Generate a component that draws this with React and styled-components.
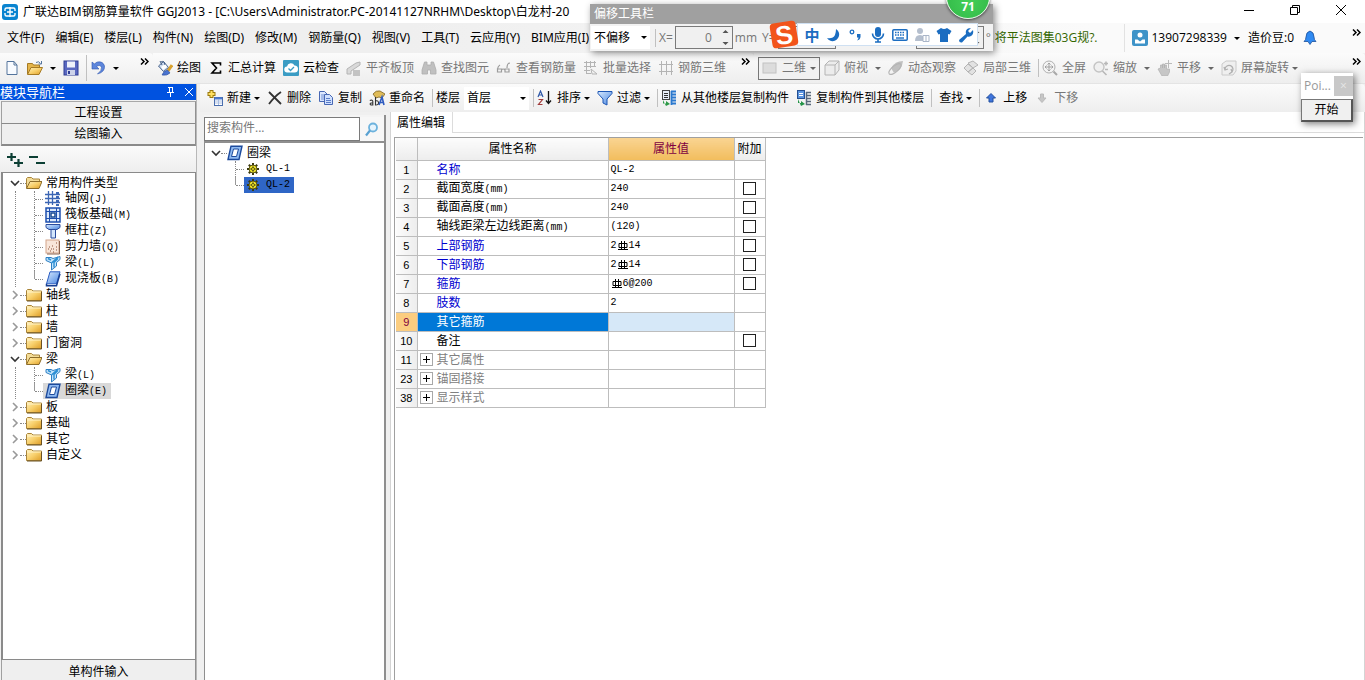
import { useState } from "react"
import styled, { createGlobalStyle, css } from "styled-components";


const GlobalStyle = createGlobalStyle`
* {
    box-sizing: border-box;
}
body {
    margin: 0;
    background: #f0f0f0;
    color: #000;
    font-family: "Open Sans", "Noto Sans CJK SC", sans-serif;
    font-size: 12px;
    line-height: 16px;
    white-space: nowrap;
    overflow: hidden;
}
button, input, select {
    font: inherit;
    color: inherit;
    margin: 0;
    padding: 0;
    border: none;
    background: none;
    border-radius: 0;
    appearance: none;
}
ul {
    list-style: none;
    margin: 0;
    padding: 0;
}
svg {
    flex: none;
    display: block;
}
`

const Window = styled.div`
display: flex;
flex-direction: column;
min-height: 100vh;
`

const TitleBar = styled.header`
display: flex;
align-items: center;
gap: 5px;
height: 23px;
padding-left: 2px;
background: #fff;
`

const Title = styled.h1`
flex: 1;
margin: 0;
font-family: "Noto Sans", "Noto Sans CJK SC", sans-serif;
font-size: 12px;
font-weight: normal;
overflow: hidden;
`

const WindowButtons = styled.div`
display: flex;
align-self: flex-start;
gap: 5px;
padding-right: 4px;
`

const WindowButton = styled.button`
display: flex;
align-items: center;
justify-content: center;
width: 41px;
height: 20px;
`

const MenuBar = styled.nav`
display: flex;
align-items: center;
height: 30px;
padding: 0 4px 0 7px;
background: linear-gradient(90deg, #efefef 30%, #fafafa 80%);
`

const Menus = styled.div`
display: flex;
gap: 11px;
font-family: "Noto Sans", "Noto Sans CJK SC", sans-serif;
`

const Account = styled.div`
display: flex;
align-items: center;
margin-left: auto;
`

const Notice = styled.a`
color: #336600;
text-decoration: none;
margin-right: 26px;
`

const UserButton = styled.button`
display: flex;
align-items: center;
gap: 4px;
margin-left: 4px;
margin-right: 8px;
`

const Bell = styled.button`
margin: 0 34px 0 8px;
`

const Toolbars = styled.div`
display: flex;
height: 31px;
border-bottom: 1px solid #e4e4e4;
`

const Strip = styled.div`
display: flex;
align-items: center;
flex: ${(p) => (p.$width ? `0 0 ${p.$width}px` : "1")};
padding: 0 4px;
border-radius: 0 4px 4px 0;
background: linear-gradient(180deg, #fbfbfb, #eeeeee);
`

const EditStrip = styled(Strip)`
flex: 0 0 28px;
padding-left: 7px;
`

const ToolButton = styled.button`
display: inline-flex;
align-items: center;
gap: 4px;
margin-right: 7px;
padding-left: ${(p) => (p.$textOnly ? 4 : 0)}px;
color: #000;
&:disabled {
    color: #777;
}
`

const Arrow = styled.i`
border: 3px solid transparent;
border-top-color: ${(p) => (p.$dim ? "#666" : "#000")};
border-bottom: none;
margin-left: ${(p) => (p.$wide ? 3 : -1)}px;
`

const Divider = styled.i`
width: 1px;
height: ${(p) => p.$tall || 18}px;
margin-right: 3px;
background: ${(p) => (p.$light ? "#e2e2e2" : "#c0c0c0")};
`

const More = styled.button`
align-self: flex-start;
margin-left: auto;
padding: 5px 0;
`

const FieldLabel = styled.label`
margin-right: 4px;
`

const SelectBox = styled.label`
display: flex;
align-items: center;
gap: 4px;
height: 23px;
width: ${(p) => p.$width}px;
padding: 0 3px;
margin-right: 4px;
background: ${(p) => (p.$framed ? "#f1f1f1" : "#fff")};
border: ${(p) => (p.$framed ? "1px solid #777" : "none")};
color: ${(p) => (p.$framed ? "#777" : "#000")};
select {
    flex: 1;
    min-width: 0;
    opacity: 1;
}
`

const Body = styled.main`
display: flex;
flex: 1;
`

const Dock = styled.aside`
display: flex;
flex-direction: column;
flex: 0 0 197px;
border-right: 1px solid #b8b8b8;
background: #f0f0f0;
`

const DockTitle = styled.div`
display: flex;
align-items: center;
justify-content: space-between;
height: 16px;
margin-bottom: 1px;
padding-right: 1px;
background: #0052e0;
color: #fff;
font-size: 13px;
div {
    display: flex;
    gap: 6px;
}
`

const DockButton = styled.button`
height: 22px;
margin-left: 1px;
border-left: 1px solid #a0a0a0;
border-top: 1px solid #a8a8a8;
border-right: 1px solid #909090;
background: #efefef;
${(p) => p.$pressed && css`
    height: 23px;
    border-top-color: #8a8a8a;
    border-bottom: 2px solid #8a8a8a;
`}
${(p) => p.$last && css`
    border-top: none;
    padding-top: 3px;
    height: 20px;
`}
`

const DockTools = styled.div`
display: flex;
gap: 6px;
align-items: center;
height: 26px;
padding: 2px 6px 0 7px;
background: linear-gradient(180deg, #fbfbfb, #eeeeee);
`

const Tree = styled.ul`
flex: 1;
margin: 0 0 0 1px;
padding-top: 2px;
background: #fff;
border: 1px solid #8a8a8a;
border-left-width: 2px;
`

const TreeRow = styled.button`
display: flex;
align-items: center;
height: 16px;
padding-left: ${(p) => p.$indent}px;
span {
    margin-left: 4px;
}
`

const Dots = styled.i`
width: ${(p) => p.$w}px;
border-top: 1px dotted #888;
`

const Branch = styled.ul`
margin-left: ${(p) => p.$x}px;
li {
    display: flex;
    align-items: center;
    height: 16px;
    border-left: 1px dotted #888;
}
li:last-child {
    border-left: none;
    padding-left: 1px;
    background: linear-gradient(#999, #999) 0 0 / 1px 8px no-repeat;
}
`

const Guide = styled.div`
margin-left: 12px;
border-left: 1px dotted #888;
`

const Leaf = styled.button`
display: flex;
align-items: center;
gap: 4px;
height: 16px;
padding: 0 4px 0 2px;
background: ${(p) => p.$bg || "transparent"};
`

const Latin = styled.span`
font-family: "Liberation Mono", monospace;
font-size: 10px;
`

const Work = styled.section`
display: flex;
flex-direction: column;
flex: 1;
min-width: 0;
padding-left: 3px;
`

const Columns = styled.div`
display: flex;
flex: 1;
`

const Members = styled.div`
display: flex;
flex-direction: column;
flex: 0 0 182px;
min-width: 0;
margin: 3px 4px 0 4px;
border-right: 2px solid #8f8f8f;
`

const Search = styled.form`
display: flex;
height: 26px;
padding-top: 2px;
background: #f4f4f4;
input {
    flex: 1;
    min-width: 0;
    height: 24px;
    padding: 0 2px 3px;
    border: 1px solid #7a7a7a;
    background: #fff;
}
input::placeholder {
    color: #777;
    opacity: 1;
}
button {
    display: flex;
    align-items: center;
    justify-content: center;
    width: 24px;
    background: #f7f7f7;
}
`

const MemberTree = styled.ul`
flex: 1;
padding-top: 2px;
background: #fff;
border-top: 2px solid #8f8f8f;
border-left: 1px solid #8f8f8f;
`

const Properties = styled.div`
display: flex;
flex-direction: column;
flex: 1;
border-left: 1px solid #d4d4d4;
border-right: 1px solid #d4d4d4;
background: #fff;
`

const Tabs = styled.div`
display: flex;
height: 21px;
&::after {
    content: "";
    flex: 1;
    border-bottom: 1px solid #dcdcdc;
}
`

const Tab = styled.button`
padding: 0 7px 0 6px;
border-right: 1px solid #dcdcdc;
`

const TableFrame = styled.div`
flex: 1;
margin: 4px 1px 0 3px;
padding-left: 1px;
border-top: 1px solid #a0a0a0;
border-left: 1px solid #a0a0a0;
`

const Table = styled.table`
border-collapse: collapse;
table-layout: fixed;
width: 369px;
th, td {
    height: 19px;
    padding: 0;
    border-right: 1px solid #bdbdbd;
    border-bottom: 1px solid #bdbdbd;
    font-weight: normal;
    line-height: 16px;
}
thead th {
    height: 22px;
    background: linear-gradient(180deg, #fcfcfc, #ededed);
}
thead th.value {
    background: linear-gradient(180deg, #f9d492, #f2bd5d);
    color: #800040;
}
`

const RowNumber = styled.th`
background: ${(p) => (p.$active ? "#fbcd80" : "linear-gradient(90deg, #fcfcfc, #ededed)")};
color: ${(p) => (p.$active ? "#800040" : "#000")};
font-family: "Liberation Sans", sans-serif;
font-size: 11px;
`

const NameCell = styled.td`
color: ${(p) => p.$color};
background: ${(p) => (p.$active ? "#0078d7" : "#fff")};
div {
    display: flex;
    align-items: center;
    height: 18px;
    padding-left: ${(p) => (p.$group ? 2 : 19)}px;
    gap: 4px;
}
`

const ValueCell = styled.td`
background: ${(p) => (p.$active ? "#d6e8f8" : "#fff")};
font-family: "Liberation Mono", monospace;
font-size: 10px;
div {
    display: flex;
    align-items: center;
    padding-left: 2px;
}
`

const CheckCell = styled.td`
input {
    display: block;
    width: 13px;
    height: 13px;
    margin: 0 auto;
    border: 1px solid #222;
}
`

const Expand = styled.button`
display: flex;
align-items: center;
justify-content: center;
width: 13px;
height: 13px;
border: 1px solid #a8a8a8;
background: #fff;
`

// floating windows

const OffsetWindow = styled.section`
position: absolute;
left: 590px;
top: 4px;
width: 403px;
height: 47px;
background: #f2f2f2;
box-shadow: 2px 2px 7px rgba(0, 0, 0, 0.45);
header {
    height: 20px;
    padding: 2px 4px;
    background: #a0a0a0;
    color: #fff;
}
`

const OffsetFields = styled.div`
display: flex;
align-items: center;
height: 27px;
padding-left: 1px;
color: #777;
label {
    display: flex;
    align-items: center;
    gap: 2px;
    margin-right: 5px;
}
`

const AngleField = styled.label`
&& {
    margin: 0 2px 0 auto;
}
`

const Spin = styled.span`
display: flex;
align-items: center;
width: ${(p) => p.$width || 58}px;
height: 23px;
border: 1px solid #7a7a7a;
background: #f0f0f0;
input {
    flex: 1;
    min-width: 0;
    text-align: right;
    padding-right: 10px;
}
svg {
    margin-right: 3px;
}
`

const ImeBar = styled.div`
position: absolute;
left: 771px;
top: 21px;
display: flex;
align-items: center;
height: 27px;
`

const ImeLogo = styled.span`
display: flex;
align-items: center;
justify-content: center;
width: 26px;
height: 25px;
border-radius: 4px;
background: #f2541b;
color: #fff;
font-family: "Liberation Sans", sans-serif;
font-size: 26px;
font-weight: bold;
transform: rotate(-9deg);
z-index: 1;
`

const ImeTools = styled.div`
display: flex;
align-items: center;
height: 23px;
padding-left: 3px;
background: #fff;
border: 1px solid #cfe0f2;
color: #1b6dc1;
button {
    display: flex;
    justify-content: center;
    width: 22px;
    font-size: 15px;
    font-weight: bold;
}
`

const Speed = styled.div`
position: absolute;
left: 946px;
top: -25px;
width: 44px;
height: 44px;
padding-top: 23px;
border-radius: 50%;
border: 1px solid #e8f8e8;
background: radial-gradient(circle at 50% 60%, #43cf57, #2eb344);
box-shadow: 0 1px 3px rgba(0, 0, 0, 0.6);
color: #fff;
font-weight: bold;
text-align: center;
`

const PointWindow = styled.section`
position: absolute;
right: 12px;
top: 73px;
width: 52px;
background: #fff;
box-shadow: 2px 2px 7px rgba(0, 0, 0, 0.5);
header {
    display: flex;
    justify-content: space-between;
    padding: 3px 0 3px 3px;
    height: 26px;
    color: #999;
    line-height: 20px;
}
header button {
    width: 19px;
    background: #c8c8c8;
    color: #e6e6e6;
}
> button {
    display: block;
    width: 100%;
    height: 23px;
    background: #f0f0f0;
    border: 1px solid #777;
    border-right: 2px solid #555;
    border-bottom: 2px solid #555;
}
`

const HiddenDefs = styled.svg`
position: absolute;
`

const grey = "#b4b4b4"

const shapes = {
    app: <>
        <rect width="16" height="16" rx="3" fill="#0a84d0" />
        <path d="M3 7V5.500Q3 4 4.500 4H11.500Q13 4 13 5.500V7M3 9v1.500Q3 12 4.500 12H11.500Q13 12 13 10.500V9M8 3v10M5 8h6" fill="none" stroke="#fff" strokeWidth="1.400" />
    </>,
    file: <path d="M3 1.500h7l3 3.500v9.500H3zM10 1.500V5h3" fill="#f8fbff" stroke="#54749c" />,
    open: <>
        <path d="M.5 14V3.500h5l1 1.500h6V8" fill="#e5b54a" stroke="#a57a24" />
        <path d="M.5 14.500L4 7.500h11.500L12 14.500z" fill="url(#gold)" stroke="#a57a24" />
        <path d="M9 2.500q3-2 4.500 1M14.500 1v3h-3" fill="none" stroke="#55759e" />
    </>,
    save: <>
        <rect x="1" y="1" width="14" height="14" fill="#5a68c0" stroke="#2f3c94" />
        <rect x="4" y="1.500" width="8" height="6" fill="#eef1fb" />
        <rect x="4" y="10" width="8" height="5" fill="#cdd3ea" />
        <rect x="5" y="11" width="2" height="3" fill="#2f3c94" />
    </>,
    undo: <path d="M2 2v7h7L6.500 6.500q4-2.500 5 1 .5 3-4 6.500 7.500-2 7-8Q13 1 7.500 2 5.500 2.500 4.500 4z" fill="#5d86dc" stroke="#2f58b0" strokeWidth=".6" />,
    paint: <>
        <path d="M1.500 6l5-4.500 5 6-5 4z" fill="#cddcf0" stroke="#46618a" />
        <path d="M4 7l4-3 2 3-4 3z" fill="#fff" />
        <path d="M5 5L3 1M4 2q3-2 4 3" fill="none" stroke="#46618a" />
        <path d="M15 5l-4 6" stroke="#d9a12c" strokeWidth="3" />
        <path d="M5 15q5 1 8-2l-2.500-3q-4 1-5.500 5z" fill="#4a74d0" stroke="#2a4c9c" strokeWidth=".6" />
    </>,
    sigma: <path d="M12.500 5.500V3H4l4.500 5L4 13h8.500v-2.500" fill="none" stroke="#000" strokeWidth="1.600" />,
    cloud: <>
        <rect width="16" height="16" rx="1" fill="#3a9cc4" />
        <path d="M4.500 12.500a3 3 0 01-.5-6 4 4 0 017.500-1 3.500 3.500 0 010 7z" fill="#fff" />
        <path d="M5.500 8.500l2 2 3.500-3.500" fill="none" stroke="#3a9cc4" strokeWidth="1.300" />
    </>,
    slab: <>
        <path d="M1 9l9-6 4-1v3L5 11v3H1z" fill="#d9d9d9" stroke={grey} />
        <path d="M7 11h7M7 13h7M7 15h7" stroke={grey} strokeWidth="1.500" />
    </>,
    find: <path d="M3.500 2h2.500v3h4V2h2.500l2.500 8v4h-5.500v-4h-3v4H1v-4z" fill="#c0c0c0" stroke="#adadad" strokeWidth=".8" />,
    glasses: <path d="M14 3q-3 0-3 5M4 5Q2 6 1.500 9M1.500 9h4v3h-4zM9 9h4v3H9zM5.500 10Q7 8 9 10" fill="none" stroke="#9c9c9c" strokeWidth="1.200" />,
    batch: <path d="M1 2.500h12M1 6.500h12M1 10.500h6M3.500 1v13M7.500 1v7M11.500 1v6M8 9l6 5H9zM4 13.500h4" fill="none" stroke="#b4b4b4" />,
    rebar: <path d="M3.500 1v14M8.500 1v14M13.500 1v14M1 4.500h14M1 11.500h14" fill="none" stroke="#b4b4b4" />,
    plane: <rect x="1" y="3" width="13" height="10" fill="#dcdcdc" stroke="#c2c2c2" />,
    cube: <path d="M1 5l4-4h10v9l-4 5H1zM1 5h10v10M11 5l4-4" fill="#ececec" stroke="#b4b4b4" />,
    orbit: <>
        <path d="M3 8q4-7 12-7-1 9-9 12z" fill="#c0c0c0" />
        <ellipse cx="7" cy="9" rx="7.500" ry="3" transform="rotate(-40 7 9)" fill="none" stroke="#b4b4b4" />
    </>,
    part: <path d="M5 3l5-2 5 4-5 3zM1 8l4-4 5 4-5 4zM5 12l5-4 3 3-4 4z" fill="#e2e2e2" stroke="#b4b4b4" />,
    full: <>
        <circle cx="7" cy="7" r="6" fill="#f4f4f4" stroke="#b0b0b0" />
        <path d="M7 3v8M3 7h8M5.500 4.500L7 3l1.500 1.500M5.500 9.500L7 11l1.500-1.500M4.500 5.500L3 7l1.500 1.500M9.500 5.500L11 7l-1.500 1.500" fill="none" stroke="#a0a0a0" />
        <path d="M11.500 11.500L15 15" stroke="#a8a8a8" strokeWidth="2" />
    </>,
    zoom: <>
        <circle cx="6" cy="7" r="5" fill="#f0f0f0" stroke="#c4c4c4" strokeWidth="1.400" />
        <path d="M9.500 11l4 4M11 3.500h4M13 1.500v4M12 9.500h3" stroke="#b8b8b8" strokeWidth="1.600" />
    </>,
    pan: <>
        <path d="M1 9l2.500-1V5h2v3-4h2v4-3h2v4h3v3l-2 4H5z" fill="#c6c6c6" stroke="#b0b0b0" strokeWidth=".7" />
        <path d="M11.500 0v8M8 3.500h7" stroke="#bbb" />
    </>,
    rotate: <>
        <path d="M1 4l4-3h10v10l-3 4H1z" fill="#efefef" stroke="#cacaca" />
        <path d="M4 9a4 4 0 117 3M3 7l1 3 3-1M8 14l3-2-1-3" fill="none" stroke="#b0b0b0" strokeWidth="1.300" />
    </>,
    create: <>
        <path d="M4.500 0v8M.5 4h8" stroke="#9a7a10" strokeWidth="4" />
        <path d="M4.500 1v6M1.500 4h6" stroke="#ffe063" strokeWidth="2" />
        <rect x="7.500" y="7.500" width="8" height="8" fill="#fff" stroke="#4a6eae" />
        <path d="M8 8.500h7" stroke="#4a7ad4" strokeWidth="2" />
        <path d="M8 11h7M8 13h7M11.500 9v6" stroke="#9ab2dd" strokeWidth=".8" />
    </>,
    remove: <path d="M2 2q4 4 12 12M14 2Q8 6 2 14" fill="none" stroke="#333" strokeWidth="1.800" />,
    copy: <>
        <path d="M1.500 1.500h5l3 3v7h-8z" fill="#dce8ff" stroke="#4868b4" />
        <path d="M3 5h3M3 7h3M3 9h3" stroke="#7090d4" />
        <path d="M6.500 4.500h5l3 3v7h-8z" fill="#cfe0ff" stroke="#4868b4" />
        <path d="M8 8.500h4M8 10.500h5M8 12.500h5" stroke="#5a7cc8" />
    </>,
    rename: <>
        <path d="M4 4q3-4 7-3l5 3-3 4-3-1-3 1z" fill="#e0bc58" stroke="#7b6225" strokeWidth=".8" />
        <path d="M.8 10.500q3-1 3 1v3.500H2q-1.800-1 0-2h2M6.500 7v8q3.500 0 3-2.500T6.500 11" fill="none" stroke="#333" strokeWidth="1.100" />
        <path d="M10 15l3-8 2 8M11 12.500h4" fill="none" stroke="#2f5cc0" strokeWidth="1.600" />
    </>,
    sort: <>
        <path d="M1 7l2.500-6L6 7M2 5h3" fill="none" stroke="#2e58a8" strokeWidth="1.200" />
        <path d="M1.500 9.500h4l-4 5h4" fill="none" stroke="#a03a3a" strokeWidth="1.200" />
        <path d="M11.500 1v12M9 10.500l2.500 3 2.500-3" fill="none" stroke="#111" strokeWidth="1.300" />
    </>,
    filter: <path d="M1 1.500h14v2L10 9v6l-4-2V9L1 3.500z" fill="url(#azure)" stroke="#1d56b4" />,
    copyFrom: <>
        <rect x="1.500" y=".5" width="7" height="9" fill="#e8eef8" stroke="#444" />
        <path d="M3 3.500h4M3 5.500h4M3 7.500h4" stroke="#333" />
        <path d="M10 1.500h5M10 4.500h5M10 7.500h5M10 10.500h5M10 13.500h5M10.500 1v14" stroke="#2b79cf" strokeWidth="1.800" />
        <path d="M2 10v3.500h3V11l4 3-4 2" fill="#2d9a48" />
    </>,
    copyTo: <>
        <rect x="1.500" y=".5" width="7" height="8" fill="#5a94df" stroke="#244f92" />
        <path d="M3 3.500h4M3 5.500h4" stroke="#fff" />
        <path d="M10 2.500h5M10 5.500h5M10 8.500h5M10 11.500h5M10 14.500h5M10.500 2v13" stroke="#58697c" strokeWidth="1.500" />
        <path d="M2 9v4h3v-2l4 3-4 2" fill="#239447" />
    </>,
    up: <path d="M8 3.500l4.500 4.500H10v4H6V8H3.500z" fill="#3f75dc" stroke="#23509f" />,
    down: <path d="M8 12.500L12 8h-2.500V4h-3v4H4z" fill="#c6c6c6" stroke="#bbb" />,
    folder: <>
        <path d="M.5 13.500V3.500l1-1h4l1.500 1.500h8.500v9.500z" fill="url(#gold)" stroke="#a98439" />
        <path d="M1 5h14" stroke="#fff3c8" />
        <path d="M15.500 5v9H1" fill="none" stroke="#6b5223" />
    </>,
    folderOpen: <>
        <path d="M.5 13V3.500l1-1h4L7 4h6.500v3" fill="#f3dc98" stroke="#a98439" />
        <path d="M.5 13.500L4 6.500h12l-3 7z" fill="url(#gold)" stroke="#8c6c2a" />
    </>,
    grid: <>
        <path d="M3.500 0v14M7.500 0v14M0 3.500h15M0 7.500h15M0 11.500h15" fill="none" stroke="#3c66b4" strokeWidth="1.300" />
        <path d="M12.500 1v14" stroke="#3c66b4" strokeWidth="3" strokeDasharray="3 1" />
    </>,
    raft: <>
        <rect x="1" y="1" width="14" height="14" fill="#dbe9fb" stroke="#1e4fae" strokeWidth="1.500" />
        <path d="M4.500 1v14M11.500 1v14M1 4.500h14M1 11.500h14" stroke="#1e4fae" />
        <rect x="6" y="6" width="4" height="4" fill="#fff" stroke="#174a92" strokeWidth="1.500" />
    </>,
    column: <>
        <path d="M1 1.500h14v3l-3 2H4l-3-2z" fill="url(#azure)" stroke="#2b4c9e" />
        <path d="M6 6.500h4.500V15H6z" fill="#d5e7fc" stroke="#2b4c9e" />
    </>,
    wall: <>
        <rect x="1" y="1" width="13" height="13" fill="#f8e6da" stroke="#d4a68c" />
        <path d="M3 10h1M7 7h1M11 4h1M5 12h1M8 10h1M4 8h1M6 10h1M11 11h1M8 13h1M11 8h1" stroke="#8a5138" strokeWidth="1.200" />
        <path d="M14.500 2v13H2" fill="none" stroke="#8a6450" />
    </>,
    beam: <>
        <path d="M1 2.500h5l2 1 7-2v3l-3.500 3V11l-5 4V8L1 5.500z" fill="#c4e4fb" stroke="#2c7fc4" />
        <path d="M6.500 8L13 2M9 12.500V7.500l4-4M3 3.500l3 1.500" fill="none" stroke="#2c8fd4" strokeWidth="1.400" />
    </>,
    cast: <>
        <path d="M5 .8h10l-3.500 12H1.500z" fill="url(#azure)" stroke="#2a5cc0" />
        <path d="M1.500 12.800v2h10l3.500-12" fill="none" stroke="#173f92" strokeWidth="1.500" />
    </>,
    ring: <>
        <path d="M4 1.200h11L12 14.500H1z" fill="#8fbaf2" stroke="#1c4a9c" strokeWidth="1.400" />
        <path d="M6.500 4h5l-2 7.500h-5z" fill="#fff" stroke="#1c4a9c" />
    </>,
    gear: <>
        <path d="M7 2v12M1 8h12M2.800 3.800l8.400 8.400M11.200 3.800l-8.400 8.400" stroke="#3c3a10" strokeWidth="2" />
        <circle cx="7" cy="8" r="4" fill="#f4ea28" stroke="#3c3a10" strokeWidth=".8" />
        <path d="M7 4.500v7M3.500 8h7" stroke="#55511a" strokeWidth=".8" />
        <circle cx="7" cy="8" r="1.500" fill="#f4ea28" stroke="#3c3a10" strokeWidth=".8" />
    </>,
    user: <>
        <rect width="16" height="16" rx="2" fill="#3e93c8" />
        <circle cx="8" cy="5" r="2.500" fill="#fff" />
        <path d="M3 13.500V9.500h2.500L8 11.500l2.500-2H13v4z" fill="#fff" />
    </>,
    bell: <path d="M8 1q4 1 4 6 0 3 2 4.500H10L8 14.500 6 11.500H2Q4 10 4 7q0-5 4-6z" fill="#2f8af2" stroke="#1b4f9a" strokeWidth=".8" />,
    lens: <>
        <circle cx="9" cy="6.500" r="4" fill="#e6f4fd" stroke="#6cb2dd" strokeWidth="1.800" />
        <path d="M6 9.500l-4 5" stroke="#5aa2d2" strokeWidth="2.200" />
    </>,
    plusPair: <path d="M0 5h9M4.500 1v8M7 11h9M11.500 7v8" stroke="#0c3f34" strokeWidth="2.200" />,
    minusPair: <path d="M0 5h9M7 11h9" stroke="#0c3f34" strokeWidth="2.200" />,
    moon: <path d="M10 2q4 3 3 7-2 6-8 5-3-1-4-3 6 1 8-3 1-3 1-6z" fill="#1b6dc1" />,
    comma: <>
        <circle cx="4" cy="5" r="1.800" fill="none" stroke="#1b6dc1" strokeWidth="1.300" />
        <path d="M9 7h3.500v3q-.5 3-3.500 3.500 1.500-1.500 1.500-3H9z" fill="#1b6dc1" />
    </>,
    mic: <>
        <rect x="5" y="0" width="6" height="10" rx="3" fill="#1b6dc1" />
        <path d="M2.500 6.500a5.500 5.500 0 0011 0M8 12v3M5 15h6" fill="none" stroke="#1b6dc1" strokeWidth="1.600" />
    </>,
    keyboard: <>
        <rect x=".8" y="2.800" width="14.400" height="10.400" rx="1" fill="none" stroke="#1b6dc1" strokeWidth="1.500" />
        <path d="M3 5.500h10M3 8h10" stroke="#1b6dc1" strokeWidth="1.500" strokeDasharray="1.500 1" />
        <path d="M4 11h8" stroke="#1b6dc1" strokeWidth="1.400" />
    </>,
    person: <>
        <circle cx="6" cy="4" r="3" fill="#b5bfce" />
        <path d="M1 14q0-6 5-6t4 6z" fill="#b5bfce" />
        <path d="M9 8.500h6v6H9zM12 8v6" fill="#fff" stroke="#a9b5c8" />
    </>,
    shirt: <path d="M5 1q3 2 6 0l4.500 3-2 3.500L12 7v8H4V7l-1.500.5-2-3.500z" fill="#1b6dc1" />,
    wrench: <path d="M1 13l7-6Q7 3 10 1.500l3-.5-3 3 2 2 3-3q1 4-2 6-2 1-3.500.500L4 15.500Q1 16 1 13z" fill="#1b6dc1" />,
}

function Gradients() {
    return (
        <HiddenDefs width="0" height="0" aria-hidden="true">
            <linearGradient id="gold" x1="0" y1="0" x2="1" y2="1">
                <stop offset="0" stopColor="#fff0bc" />
                <stop offset="0.500" stopColor="#f8d06c" />
                <stop offset="1" stopColor="#dd9c26" />
            </linearGradient>
            <linearGradient id="azure" x1="0" y1="0" x2="1" y2="1">
                <stop offset="0" stopColor="#d6e9ff" />
                <stop offset="1" stopColor="#4a86e0" />
            </linearGradient>
        </HiddenDefs>
    )
}

function Icon({ name }) {
    return <svg width="16" height="16" viewBox="0 0 16 16" aria-hidden="true">{shapes[name]}</svg>
}

function Chevron({ open }) {
    return (
        <svg width="10" height="10" viewBox="0 0 10 10" aria-hidden="true">
            <path d={open ? "M1 3l4 4 4-4" : "M3 1l4 4-4 4"} fill="none" stroke={open ? "#333" : "#999"} strokeWidth="1.600" />
        </svg>
    )
}

function Bar() {
    return (
        <svg width="12" height="11" viewBox="0 0 12 11" aria-label="三级钢">
            <path d="M2 3.500v4h8v-4H2M1 9.500h10M4.500 1v9M7.500 1v9" fill="none" stroke="#000" />
        </svg>
    )
}

function Overflow() {
    return (
        <More aria-label="更多">
            <svg width="9" height="7" viewBox="0 0 9 7"><path d="M1 .5l3 3-3 3M5 .5l3 3-3 3" fill="none" stroke="#000" strokeWidth="1.500" /></svg>
        </More>
    )
}

function Tool({ icon, children, arrow, wide, disabled, textOnly }) {
    return (
        <ToolButton disabled={disabled} $textOnly={textOnly}>
            {icon && <Icon name={icon} />}
            {children}
            {arrow && <Arrow $wide={wide} $dim={disabled} />}
        </ToolButton>
    )
}

const menus = ["文件(F)", "编辑(E)", "楼层(L)", "构件(N)", "绘图(D)", "修改(M)", "钢筋量(Q)", "视图(V)", "工具(T)", "云应用(Y)", "BIM应用(I)"]

const drawTools = [
    ["paint", "绘图"],
    ["sigma", "汇总计算"],
    ["cloud", "云检查"],
    ["slab", "平齐板顶", true],
    ["find", "查找图元", true],
    ["glasses", "查看钢筋量", true],
    ["batch", "批量选择", true],
    ["rebar", "钢筋三维", true],
]

const modules = [
    { name: "常用构件类型", items: [["grid", "轴网", "(J)"], ["raft", "筏板基础", "(M)"], ["column", "框柱", "(Z)"], ["wall", "剪力墙", "(Q)"], ["beam", "梁", "(L)"], ["cast", "现浇板", "(B)"]] },
    { name: "轴线" },
    { name: "柱" },
    { name: "墙" },
    { name: "门窗洞" },
    { name: "梁", items: [["beam", "梁", "(L)"], ["ring", "圈梁", "(E)", true]] },
    { name: "板" },
    { name: "基础" },
    { name: "其它" },
    { name: "自定义" },
]

const key = "#0000d0"

const properties = [
    { no: 1, name: "名称", color: key, value: "QL-2" },
    { no: 2, name: "截面宽度", unit: "(mm)", value: "240", check: true },
    { no: 3, name: "截面高度", unit: "(mm)", value: "240", check: true },
    { no: 4, name: "轴线距梁左边线距离", unit: "(mm)", value: "(120)", check: true },
    { no: 5, name: "上部钢筋", color: key, value: <>2<Bar />14</>, check: true },
    { no: 6, name: "下部钢筋", color: key, value: <>2<Bar />14</>, check: true },
    { no: 7, name: "箍筋", color: key, value: <><Bar />6@200</>, check: true },
    { no: 8, name: "肢数", color: key, value: "2" },
    { no: 9, name: "其它箍筋", color: "#fff", active: true },
    { no: 10, name: "备注", check: true },
    { no: 11, name: "其它属性", color: "#808080", group: true },
    { no: 23, name: "锚固搭接", color: "#808080", group: true },
    { no: 38, name: "显示样式", color: "#808080", group: true },
]

function ModuleTree() {
    return (
        <Tree>
            {modules.map((group) => (
                <li key={group.name}>
                    <TreeRow $indent={7}>
                        <Chevron open={!!group.items} />
                        <Dots $w={6} />
                        <Icon name={group.items ? "folderOpen" : "folder"} />
                        <span>{group.name}</span>
                    </TreeRow>
                    {group.items && (
                        <Guide>
                            <Branch $x={18}>
                                {group.items.map(([icon, label, letter, selected]) => (
                                    <li key={label}>
                                        <Dots $w={8} />
                                        <Leaf $bg={selected && "#d9d9d9"}>
                                            <Icon name={icon} />
                                            <span>{label}<Latin>{letter}</Latin></span>
                                        </Leaf>
                                    </li>
                                ))}
                            </Branch>
                        </Guide>
                    )}
                </li>
            ))}
        </Tree>
    )
}

function PropertyTable() {
    return (
        <Table>
            <colgroup>
                <col width="21" />
                <col width="191" />
                <col width="126" />
                <col width="31" />
            </colgroup>
            <thead>
                <tr>
                    <th></th>
                    <th>属性名称</th>
                    <th className="value">属性值</th>
                    <th>附加</th>
                </tr>
            </thead>
            <tbody>
                {properties.map((row) => (
                    <tr key={row.no}>
                        <RowNumber $active={row.active}>{row.no}</RowNumber>
                        <NameCell $color={row.color || "#000"} $active={row.active} $group={row.group}>
                            <div>
                                {row.group && (
                                    <Expand aria-label={row.name}>
                                        <svg width="7" height="7" viewBox="0 0 7 7"><path d="M0 3.500h7M3.500 0v7" stroke="#000" /></svg>
                                    </Expand>
                                )}
                                <span>{row.name}{row.unit && <Latin>{row.unit}</Latin>}</span>
                            </div>
                        </NameCell>
                        <ValueCell $active={row.active}><div>{row.value}</div></ValueCell>
                        <CheckCell>{row.check && <input type="checkbox" aria-label={row.name} />}</CheckCell>
                    </tr>
                ))}
            </tbody>
        </Table>
    )
}

function SpinArrows() {
    return (
        <svg width="7" height="17" viewBox="0 0 7 17"><path d="M0.500 4L3.500 1l3 3zM0.500 13l3 3 3-3z" fill="#555" /></svg>
    )
}

function App() {

    const [offset, setOffset] = useState("0")

    return (
        <Window>
            <GlobalStyle />
            <Gradients />
            <TitleBar>
                <Icon name="app" />
                <Title>广联达BIM钢筋算量软件 GGJ2013 - [C:\Users\Administrator.PC-20141127NRHM\Desktop\白龙村-20</Title>
                <WindowButtons>
                    <WindowButton aria-label="最小化"><svg width="10" height="10"><path d="M0 5.500h10" stroke="#000" /></svg></WindowButton>
                    <WindowButton aria-label="还原"><svg width="10" height="10"><path d="M.5 2.500h7v7h-7zM2.500 2.500v-2h7v7h-2" fill="none" stroke="#000" /></svg></WindowButton>
                    <WindowButton aria-label="关闭"><svg width="10" height="10"><path d="M0 0l10 10M10 0L0 10" stroke="#000" /></svg></WindowButton>
                </WindowButtons>
            </TitleBar>

            <MenuBar>
                <Menus>
                    {menus.map((menu) => <button key={menu}>{menu}</button>)}
                </Menus>
                <Account>
                    <Notice href="#">将平法图集03G规?.</Notice>
                    <Divider $tall={28} $light />
                    <UserButton><Icon name="user" />13907298339<Arrow $wide /></UserButton>
                    <span>造价豆:0</span>
                    <Bell aria-label="消息"><Icon name="bell" /></Bell>
                    <Overflow />
                </Account>
            </MenuBar>

            <Toolbars>
                <Strip $width={153}>
                    <Tool icon="file" />
                    <Tool icon="open" arrow wide />
                    <Tool icon="save" />
                    <Divider $tall={26} />
                    <Tool icon="undo" arrow wide />
                    <Overflow />
                </Strip>
                <Strip $width={601}>
                    {drawTools.map(([icon, label, disabled]) => (
                        <Tool key={label} icon={icon} disabled={disabled}>{label}</Tool>
                    ))}
                    <Overflow />
                </Strip>
                <Strip>
                    <SelectBox $width={62} $framed>
                        <Icon name="plane" />
                        <select aria-label="视图模式" disabled><option>二维</option></select>
                        <Arrow $dim />
                    </SelectBox>
                    <Tool icon="cube" arrow wide disabled>俯视</Tool>
                    <Tool icon="orbit" disabled>动态观察</Tool>
                    <Tool icon="part" disabled>局部三维</Tool>
                    <Divider />
                    <Tool icon="full" disabled>全屏</Tool>
                    <Tool icon="zoom" arrow wide disabled>缩放</Tool>
                    <Tool icon="pan" arrow wide disabled>平移</Tool>
                    <Tool icon="rotate" arrow disabled>屏幕旋转</Tool>
                    <Overflow />
                </Strip>
            </Toolbars>

            <Body>
                <Dock>
                    <DockTitle>
                        模块导航栏
                        <div>
                            <button aria-label="固定"><svg width="12" height="12"><path d="M3 1.500h5M4.500 1v5M7.500 1v5M2 6.500h7M5.500 7v4" fill="none" stroke="#fff" /></svg></button>
                            <button aria-label="关闭面板"><svg width="12" height="12"><path d="M2 2l8 8M10 2l-8 8" stroke="#fff" /></svg></button>
                        </div>
                    </DockTitle>
                    <DockButton>工程设置</DockButton>
                    <DockButton $pressed>绘图输入</DockButton>
                    <DockTools>
                        <button aria-label="展开"><Icon name="plusPair" /></button>
                        <button aria-label="折叠"><Icon name="minusPair" /></button>
                    </DockTools>
                    <ModuleTree />
                    <DockButton $last>单构件输入</DockButton>
                </Dock>

                <Work>
                    <EditStrip>
                        <Tool icon="create" arrow>新建</Tool>
                        <Tool icon="remove">删除</Tool>
                        <Tool icon="copy">复制</Tool>
                        <Tool icon="rename">重命名</Tool>
                        <Divider />
                        <FieldLabel htmlFor="floor">楼层</FieldLabel>
                        <SelectBox as="div" $width={65}>
                            <select id="floor"><option>首层</option></select>
                            <Arrow />
                        </SelectBox>
                        <Divider />
                        <Tool icon="sort" arrow>排序</Tool>
                        <Tool icon="filter" arrow>过滤</Tool>
                        <Divider />
                        <Tool icon="copyFrom">从其他楼层复制构件</Tool>
                        <Tool icon="copyTo">复制构件到其他楼层</Tool>
                        <Divider />
                        <Tool arrow textOnly>查找</Tool>
                        <Divider />
                        <Tool icon="up">上移</Tool>
                        <Tool icon="down" disabled>下移</Tool>
                    </EditStrip>
                    <Columns>
                        <Members>
                            <Search>
                                <input aria-label="搜索构件" placeholder="搜索构件..." />
                                <button type="button" aria-label="搜索"><Icon name="lens" /></button>
                            </Search>
                            <MemberTree>
                                <li>
                                    <TreeRow $indent={6}>
                                        <Chevron open />
                                        <Dots $w={6} />
                                        <Icon name="ring" />
                                        <span>圈梁</span>
                                    </TreeRow>
                                    <Branch $x={30}>
                                        <li><Dots $w={8} /><Leaf><Icon name="gear" /><Latin>QL-1</Latin></Leaf></li>
                                        <li><Dots $w={8} /><Leaf $bg="#2f66c6"><Icon name="gear" /><Latin>QL-2</Latin></Leaf></li>
                                    </Branch>
                                </li>
                            </MemberTree>
                        </Members>
                        <Properties>
                            <Tabs><Tab>属性编辑</Tab></Tabs>
                            <TableFrame>
                                <PropertyTable />
                            </TableFrame>
                        </Properties>
                    </Columns>
                </Work>
            </Body>

            <OffsetWindow>
                <header>偏移工具栏</header>
                <OffsetFields>
                    <SelectBox $width={59}>
                        <select aria-label="偏移方式"><option>不偏移</option></select>
                        <Arrow />
                    </SelectBox>
                    <Divider />
                    <label>X=<Spin><input value={offset} onChange={(e) => setOffset(e.target.value)} /><SpinArrows /></Spin>mm</label>
                    <label>Y=<Spin><input /><SpinArrows /></Spin></label>
                    <AngleField><Spin $width={68}><input /><SpinArrows /></Spin>°</AngleField>
                </OffsetFields>
            </OffsetWindow>

            <ImeBar>
                <ImeLogo>S</ImeLogo>
                <ImeTools>
                    <button>中</button>
                    {["moon", "comma", "mic", "keyboard", "person", "shirt", "wrench"].map((name) => (
                        <button key={name} aria-label={name}><Icon name={name} /></button>
                    ))}
                </ImeTools>
            </ImeBar>

            <Speed>71</Speed>

            <PointWindow>
                <header>Poi...<button aria-label="关闭">×</button></header>
                <button>开始</button>
            </PointWindow>
        </Window>
    )
}

export default App
